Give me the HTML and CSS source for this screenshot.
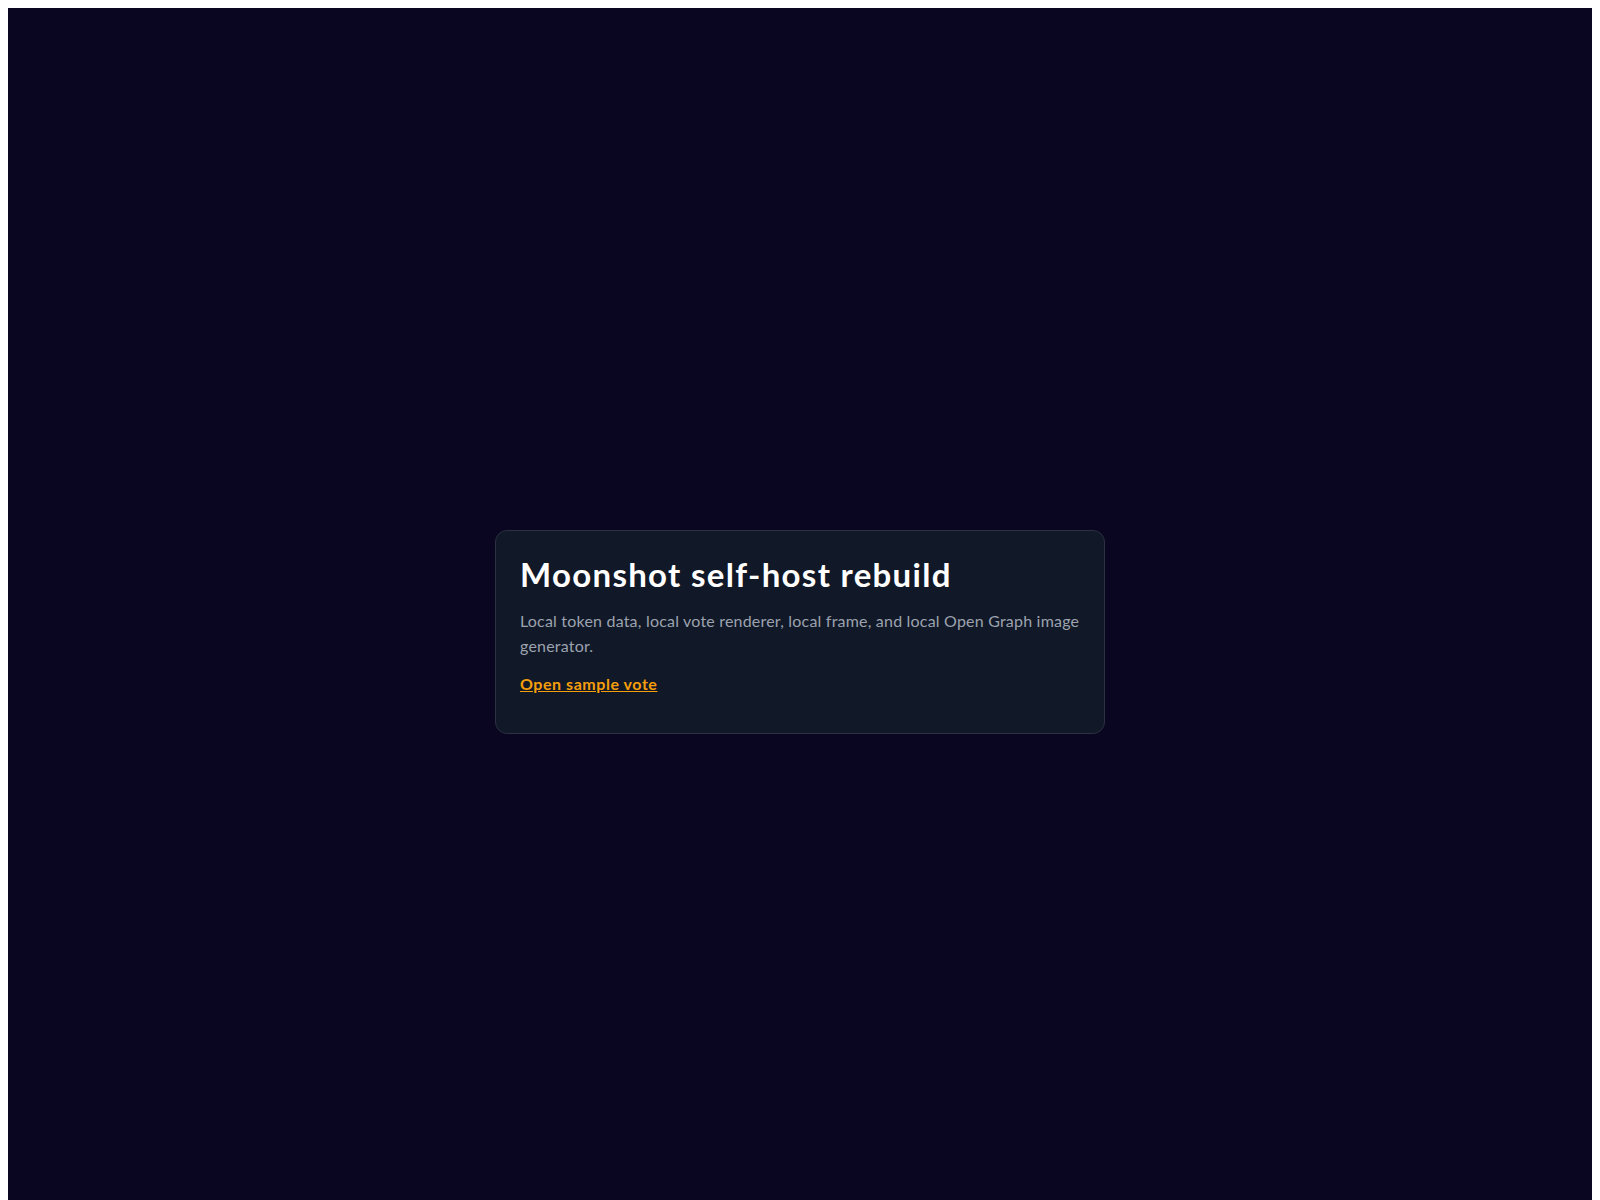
FILE: index.html
```html
<!DOCTYPE html>
<html lang="en">
<head>
<meta charset="utf-8">
<title>Moonshot self-host rebuild</title>
<link rel="stylesheet" href="styles.css">
</head>
<body>
<main class="page">
  <section class="card">
    <h1 class="title">Moonshot self-host rebuild</h1>
    <p class="desc">Local token data, local vote renderer, local frame, and local Open Graph image generator.</p>
    <p class="links"><a class="link" href="#">Open sample vote</a></p>
  </section>
</main>
</body>
</html>
```
FILE: styles.css
```css
body {
  margin: 8px;
  background: #ffffff;
  font-family: Lato, "Noto Sans", sans-serif;
}
.page {
  min-height: 100vh;
  padding: 24px;
  background: #0a0520;
  display: flex;
  align-items: center;
  justify-content: center;
}
.card {
  width: 560px;
  padding: 24px;
  background: #111827;
  border: 1px solid #2b3141;
  border-radius: 12px;
  box-sizing: content-box;
}
.title {
  margin: 0 0 15px;
  font-size: 33px;
  font-weight: 700;
  line-height: 38px;
  letter-spacing: 1.3px;
  color: #ffffff;
}
.desc {
  margin: 0 0 12px;
  font-size: 16px;
  line-height: 25.6px;
  letter-spacing: 0.2px;
  color: #9ca3af;
}
.links {
  margin: 0 0 13px;
  font-size: 16px;
  line-height: 25.6px;
}
.link {
  color: #f59e0b;
  font-weight: 700;
  letter-spacing: 0.55px;
  text-decoration: underline;
}
```
